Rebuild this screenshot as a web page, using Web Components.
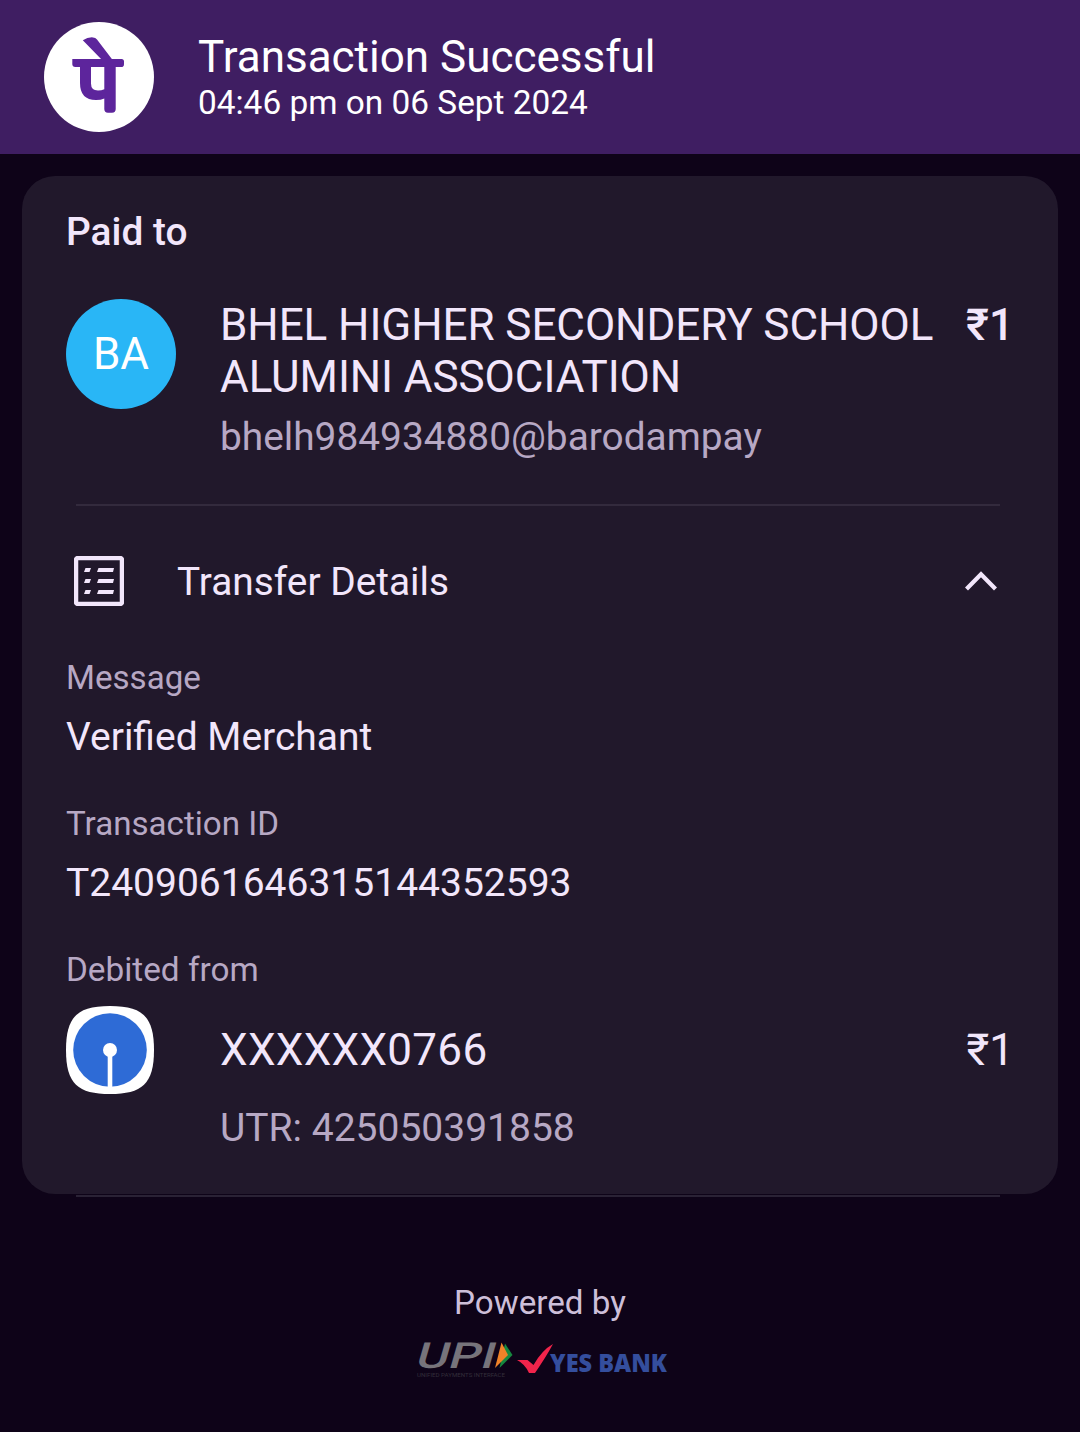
<!DOCTYPE html>
<html lang="en">
<head>
<meta charset="utf-8">
<title>Transaction Successful</title>
<style>
html,body{margin:0;padding:0;background:#0e0318}
body{width:1080px;height:1432px;overflow:hidden;font-family:Roboto,"Noto Sans",sans-serif;color:#f2e6fb}
</style>
</head>
<body>
<receipt-page></receipt-page>
<script>
const define = (name, html) => customElements.define(name, class extends HTMLElement {
  constructor() {
    super();
    const t = document.createElement('template');
    t.innerHTML = html;
    this.attachShadow({mode: 'open'}).append(t.content.cloneNode(true));
  }
});

define('brand-logo', `
<style>:host{display:block;width:110px;height:110px;flex:none}svg{display:block}</style>
<svg width="110" height="110" viewBox="0 0 110 110">
  <circle cx="55" cy="55" r="55" fill="#fff"/>
  <g fill="#5d259c">
    <path d="M38.800 18.300Q44 15 49 15.400q2.500.2 4 2L69 38.500H58.500z"/>
    <path d="M28.300 37H77.500q2.500 0 2.500 2.500v2.700q0 2.800-2.800 2.800H31.300q-3 0-3-3z"/>
    <path fill-rule="evenodd" d="M36 43H71.700v44q0 3.700-3.700 3.700h-4q-3.700 0-3.700-3.700V76.500Q57 78 52 78 36 78 36 61zM47 45v16.500q0 7 7 7 3.500 0 6.300-1.300V45z"/>
  </g>
</svg>`);

define('receipt-header', `
<style>
:host{display:flex;align-items:center;gap:44px;height:154px;box-sizing:border-box;padding:0 44px;background:#3f1e62;color:#fff}
.t{font-size:44px;line-height:52px;white-space:nowrap}
.d{font-size:33.4px;line-height:40px;white-space:nowrap}
</style>
<brand-logo></brand-logo>
<div><div class="t"><slot name="title"></slot></div><div class="d"><slot name="date"></slot></div></div>`);

define('payee-row', `
<style>
:host{display:flex;align-items:flex-start;margin-top:43px}
.av{width:110px;height:110px;border-radius:50%;background:#29b6f6;color:#fff;font-size:44px;display:flex;align-items:center;justify-content:center;flex:none}
.m{margin-left:44px;flex:1}
.n{font-size:44px;line-height:52px;white-space:nowrap;letter-spacing:-.07px}
.u{font-size:38.85px;line-height:46px;margin-top:11px;color:#b7a8c4}
.a{font-size:44px;line-height:52px;font-weight:500}
</style>
<div class="av"><slot name="initials"></slot></div>
<div class="m"><div class="n"><slot name="name"></slot></div><div class="u"><slot name="upi"></slot></div></div>
<div class="a"><slot name="amount"></slot></div>`);

define('section-toggle', `
<style>
:host{display:flex;align-items:center;height:50px;margin-top:50px;padding:0 17px 0 8px}
.l{font-size:38.85px;line-height:46px;margin-left:53px;flex:1;padding-top:2px}
svg{display:block}
</style>
<svg width="50" height="50" viewBox="0 0 50 50" fill="none" stroke="#f2e6fb">
  <rect x="2" y="2" width="46" height="46" rx="2" stroke-width="4.500"/>
  <g fill="#f2e6fb" stroke="none">
    <path d="M11.500 12h5.500l-1.500 4h-5.500zM24.500 12h15.500l-1 4h-16zM11.500 23h5.500l-1.500 4h-5.500zM24.500 23h15.500l-1 4h-16zM11.500 34h5.500l-1.500 4h-5.500zM24.500 34h15.500l-1 4h-16z"/>
  </g>
</svg>
<div class="l"><slot></slot></div>
<svg width="32" height="20" viewBox="0 0 32 20" fill="none" stroke="#f2e6fb" stroke-width="4.200"><path d="M1.500 18L16 3.200L30.500 18"/></svg>`);

define('detail-field', `
<style>
:host{display:block;margin-bottom:44px}
.k{font-size:33.15px;line-height:40px;color:#b7a8c4}
.v{font-size:39px;line-height:46px;margin-top:16px}
</style>
<div class="k"><slot name="label"></slot></div><div class="v"><slot></slot></div>`);

define('debit-row', `
<style>
:host{display:block}
.k{font-size:33.3px;line-height:40px;color:#b7a8c4}
.r{display:flex;align-items:center;height:88px;margin-top:16px}
.v{font-size:44px;line-height:52px;margin-left:66px;flex:1;letter-spacing:.3px}
.a{font-size:44px;line-height:52px}
.u{font-size:39px;line-height:46px;margin:11px 0 0 154px;color:#b7a8c4}
svg{display:block}
</style>
<div class="k"><slot name="label"></slot></div>
<div class="r">
<svg width="88" height="88" viewBox="0 0 88 88">
  <path d="M44 0C76 0 88 10 88 44S76 88 44 88 0 78 0 44 12 0 44 0z" fill="#fff"/>
  <circle cx="44" cy="44" r="36.800" fill="#2e6bd6"/>
  <circle cx="44" cy="44" r="7" fill="#fff"/><path d="M44 44v39" stroke="#fff" stroke-width="4.600"/>
</svg>
<div class="v"><slot name="account"></slot></div><div class="a"><slot name="amount"></slot></div></div>
<div class="u"><slot name="utr"></slot></div>`);

define('receipt-card', `
<style>
:host{display:block;box-sizing:border-box;margin:22px 22px 0;height:1018px;padding:33px 44px 0;border-radius:33px;background:#21182b}
.h{font-size:38.85px;line-height:46px;font-weight:500;padding-bottom:1px}
</style>
<div class="h"><slot name="heading"></slot></div><slot></slot>`);

define('powered-by', `
<style>
:host{display:flex;flex-direction:column;align-items:center;margin-top:86px;color:#cdbfd9}
.p{font-size:33.2px;line-height:40px}
svg{display:block;margin:7px 0 0 5px;overflow:visible}
</style>
<div class="p"><slot></slot></div>
<svg width="254" height="56" viewBox="0 -10 254 56">
  <g transform="translate(0 28) skewX(-16)"><text x="-2" y="0" font-family="Roboto,sans-serif" font-weight="500" font-size="36" textLength="79" lengthAdjust="spacingAndGlyphs" fill="#77747b">UPI</text></g>
  <path d="M89 3.500l7.500 11.500-13 13z" fill="#16883e"/><path d="M85.500 2.500l6.500 12.500-13 13z" fill="#f08228"/>
  <text x="1" y="37" font-family="Roboto,sans-serif" font-size="4.500" textLength="88" lengthAdjust="spacingAndGlyphs" fill="#332e3a">UNIFIED PAYMENTS INTERFACE</text>
  <path d="M101 20h10.500l6 5Q126 10 137 4Q130 17 119 33h-6Q109 24 101 20z" fill="#f1244b"/>
  <text x="134" y="32" font-family="'Open Sans','Noto Sans',sans-serif" font-weight="800" font-size="25" textLength="117" lengthAdjust="spacingAndGlyphs" fill="#344e9d">YES BANK</text>
</svg>`);

define('receipt-page', `
<style>
:host{display:block;height:1432px}
.line{height:2px;margin:44px 14px 0 10px;background:#332a3d}
.end{height:2px;margin:1px 80px 0 76px;background:#2a2235}
.fields{padding-top:52px}
</style>
<receipt-header><span slot="title">Transaction Successful</span><span slot="date">04:46 pm on 06 Sept 2024</span></receipt-header>
<receipt-card>
  <span slot="heading">Paid to</span>
  <payee-row><span slot="initials">BA</span><span slot="name">BHEL HIGHER SECONDERY SCHOOL<br>ALUMINI ASSOCIATION</span><span slot="upi">bhelh984934880@barodampay</span><span slot="amount">₹1</span></payee-row>
  <div class="line"></div>
  <section-toggle>Transfer Details</section-toggle>
  <div class="fields">
    <detail-field><span slot="label">Message</span>Verified Merchant</detail-field>
    <detail-field><span slot="label">Transaction ID</span>T2409061646315144352593</detail-field>
    <debit-row><span slot="label">Debited from</span><span slot="account">XXXXXX0766</span><span slot="amount">₹1</span><span slot="utr">UTR: 425050391858</span></debit-row>
  </div>
</receipt-card>
<div class="end"></div>
<powered-by>Powered by</powered-by>`);
</script>
</body>
</html>
